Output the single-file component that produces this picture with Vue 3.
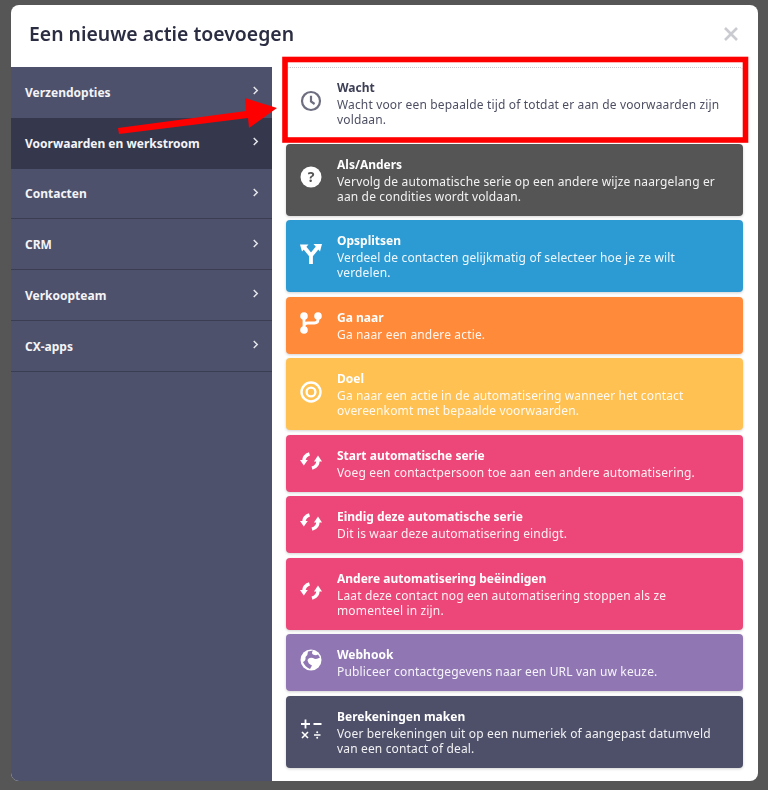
<script setup>
const menu = [
  { label: 'Verzendopties' },
  { label: 'Voorwaarden en werkstroom', active: true },
  { label: 'Contacten' },
  { label: 'CRM' },
  { label: 'Verkoopteam' },
  { label: 'CX-apps' },
]
const actions = [
  { t: 'Wacht', d: 'Wacht voor een bepaalde tijd of totdat er aan de voorwaarden zijn voldaan.', c: 'white', i: 'clock' },
  { t: 'Als/Anders', d: 'Vervolg de automatische serie op een andere wijze naargelang er aan de condities wordt voldaan.', c: 'gray', i: 'question' },
  { t: 'Opsplitsen', d: 'Verdeel de contacten gelijkmatig of selecteer hoe je ze wilt verdelen.', c: 'blue', i: 'split' },
  { t: 'Ga naar', d: 'Ga naar een andere actie.', c: 'orange', i: 'branch' },
  { t: 'Doel', d: 'Ga naar een actie in de automatisering wanneer het contact overeenkomt met bepaalde voorwaarden.', c: 'yellow', i: 'target' },
  { t: 'Start automatische serie', d: 'Voeg een contactpersoon toe aan een andere automatisering.', c: 'pink', i: 'sync' },
  { t: 'Eindig deze automatische serie', d: 'Dit is waar deze automatisering eindigt.', c: 'pink', i: 'sync' },
  { t: 'Andere automatisering beëindigen', d: 'Laat deze contact nog een automatisering stoppen als ze momenteel in zijn.', c: 'pink', i: 'sync' },
  { t: 'Webhook', d: 'Publiceer contactgegevens naar een URL van uw keuze.', c: 'purple', i: 'globe' },
  { t: 'Berekeningen maken', d: 'Voer berekeningen uit op een numeriek of aangepast datumveld van een contact of deal.', c: 'navy', i: 'math' },
]
</script>

<template>
  <div class="page">
    <div class="modal">
      <header class="head">
        <h1 class="title">Een nieuwe actie toevoegen</h1>
        <svg class="close" viewBox="0 0 16 16" width="16" height="16" aria-hidden="true">
          <path d="M2 2 14 14M14 2 2 14" fill="none" stroke="#c9cbd1" stroke-width="2.6" />
        </svg>
      </header>
      <div class="body">
        <nav class="side">
          <div v-for="m in menu" :key="m.label" class="row" :class="{ active: m.active }">
            <span>{{ m.label }}</span>
            <svg viewBox="0 0 8 10" width="7" height="9" aria-hidden="true">
              <path d="M2 1 6 5 2 9" fill="none" stroke="#e6e7ec" stroke-width="1.7" />
            </svg>
          </div>
        </nav>
        <main class="list">
          <article v-for="a in actions" :key="a.t" class="card" :class="a.c">
            <div class="icon">
              <svg v-if="a.i === 'clock'" viewBox="0 0 22 22" width="22" height="22">
                <circle cx="11" cy="11" r="9" fill="none" stroke="currentColor" stroke-width="2.2" />
                <path d="M11 5.8V11.4L14.6 14" fill="none" stroke="currentColor" stroke-width="2.2" />
              </svg>
              <svg v-else-if="a.i === 'question'" viewBox="0 0 22 22" width="22" height="22">
                <circle cx="11" cy="11" r="10.5" fill="currentColor" />
                <text x="11" y="15.8" text-anchor="middle" class="q">?</text>
              </svg>
              <svg v-else-if="a.i === 'split'" viewBox="0 0 22 22" width="22" height="22">
                <path d="M11 21V12.5L4.5 4.5M11 12.5 17.5 4.5" fill="none" stroke="currentColor" stroke-width="3.8" />
                <path d="M0 1.5H8.5L2 8.5ZM22 1H13.5L20 8.5Z" fill="currentColor" />
              </svg>
              <svg v-else-if="a.i === 'branch'" viewBox="0 0 22 22" width="22" height="22">
                <circle cx="4" cy="4" r="3.8" fill="currentColor" />
                <circle cx="18" cy="4" r="3.8" fill="currentColor" />
                <circle cx="4" cy="18" r="3.8" fill="currentColor" />
                <path d="M4 4V18M18 4V7.5Q18 11 14.5 11H8Q4 11 4 15" fill="none" stroke="currentColor" stroke-width="2.8" />
              </svg>
              <svg v-else-if="a.i === 'target'" viewBox="0 0 22 22" width="22" height="22">
                <circle cx="11" cy="11" r="9.5" fill="none" stroke="currentColor" stroke-width="2.4" />
                <circle cx="11" cy="11" r="4.4" fill="none" stroke="currentColor" stroke-width="2.4" />
              </svg>
              <svg v-else-if="a.i === 'sync'" viewBox="0 0 22 22" width="22" height="22">
                <path d="M3.8 11.5Q3.8 5.5 9.5 3.8" fill="none" stroke="currentColor" stroke-width="3.4" />
                <path d="M0 10H7.8L3.8 15.5Z" fill="currentColor" />
                <path d="M18 10.5Q18 16.5 12 18.2" fill="none" stroke="currentColor" stroke-width="3.4" />
                <path d="M14 11.5H22L18 5.5Z" fill="currentColor" />
              </svg>
              <svg v-else-if="a.i === 'globe'" viewBox="0 0 22 22" width="22" height="22">
                <circle cx="11" cy="11" r="10.5" fill="currentColor" />
                <path d="M13 1.5Q11 4 13 5.5Q16 7 18 5.5L20 8.5Q16 11 13 9Q9 8 7.5 11Q8 15 12 16.5L10 20Q5 18 3 13Q6 12 5.5 8Q8 6 8 2.5Z" class="land" />
              </svg>
              <svg v-else viewBox="0 0 22 22" width="22" height="22">
                <path d="M5.5 1.5V10.5M1 6H10M13.5 6H21.5" fill="none" stroke="currentColor" stroke-width="1.8" />
                <path d="M2 14 8 20M8 14 2 20M14 17H20.5" fill="none" stroke="currentColor" stroke-width="1.6" />
                <circle cx="17.2" cy="14.3" r="1" fill="currentColor" />
                <circle cx="17.2" cy="19.7" r="1" fill="currentColor" />
              </svg>
            </div>
            <div class="text">
              <h2>{{ a.t }}</h2>
              <p>{{ a.d }}</p>
            </div>
          </article>
        </main>
      </div>
      <svg class="mark" viewBox="11 5 747 776" width="747" height="776" aria-hidden="true">
        <rect x="285" y="59.5" width="460.5" height="80.5" fill="none" stroke="#fe0000" stroke-width="5.6" />
        <path d="M118 128 246 111 245 98 277 108 249 128 248 118 119 134Z" fill="#fe0000" />
      </svg>
    </div>
  </div>
</template>

<style scoped>
.page {
  width: 768px;
  height: 790px;
  padding: 5px 10px 9px 11px;
  box-sizing: border-box;
  background: #565656;
  font-family: "Noto Sans", "Open Sans", sans-serif;
}
.modal {
  position: relative;
  height: 776px;
  display: flex;
  flex-direction: column;
  background: #fff;
  border-radius: 8px;
  overflow: hidden;
  filter: blur(0.3px);
}
.head {
  height: 62px;
  flex: none;
  display: flex;
  align-items: center;
  justify-content: space-between;
  padding: 0 19px 6px 18px;
  box-sizing: border-box;
}
.title {
  margin: 0;
  font-size: 19.4px;
  font-weight: 600;
  color: #2b2d42;
}
.close { margin-top: 2px; }
.body {
  flex: 1;
  display: flex;
  min-height: 0;
}
.side {
  width: 261px;
  flex: none;
  background: #4e516b;
}
.row {
  height: 50.75px;
  box-sizing: border-box;
  display: flex;
  align-items: center;
  justify-content: space-between;
  padding: 1px 13px 0 14px;
  border-bottom: 1px solid #3b3d52;
  color: #f4f4f7;
  font-size: 12px;
  font-weight: 700;
}
.row svg { margin-top: -3px; }
.row:first-child, .row:nth-child(2) { border-bottom-color: transparent; }
.row.active { background: #35374c; }
.list {
  flex: 1;
  display: flex;
  flex-direction: column;
  gap: 4.55px;
  padding: 0 15px 13px 14px;
}
.card {
  display: flex;
  align-items: center;
  padding: 12px 18px 12px 14px;
  border-radius: 4px;
  color: #fff;
  box-shadow: 0 1px 3px rgba(0, 0, 0, .18);
}
.icon {
  width: 22px;
  height: 22px;
  flex: none;
  margin: 0 15px 5px 0;
}
.icon svg { display: block; }
.text { min-width: 0; flex: 1; }
.text h2 {
  margin: 0;
  font-size: 12px;
  line-height: 18px;
  font-weight: 700;
}
.text p {
  margin: 0;
  font-size: 12px;
  line-height: 15px;
  letter-spacing: .15px;
  opacity: .92;
}
.q { font: 700 14px "Noto Sans", sans-serif; fill: #555; }
.white { background: #fff; color: #3d3f55; border-top: 1px dotted #c8c8cc; padding-top: 11px; box-shadow: none; }
.white .icon { color: #6d6f80; }
.gray { background: #555; }
.blue { background: #2d9bd3; }
.orange { background: #ff8a3a; }
.yellow { background: #ffc152; }
.pink { background: #ec4778; }
.purple { background: #9077b4; }
.navy { background: #4e506a; }
.land { fill: #9077b4; }
.mark {
  position: absolute;
  left: 0;
  top: 0;
  pointer-events: none;
}
</style>
